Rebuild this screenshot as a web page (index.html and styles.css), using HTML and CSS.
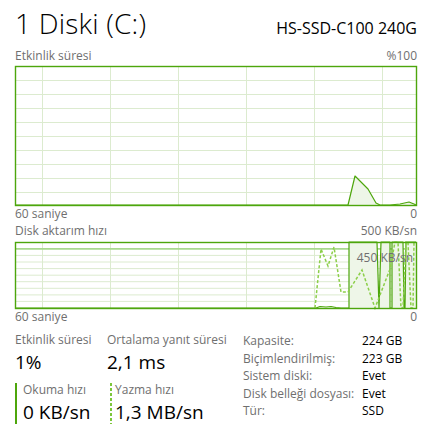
FILE: index.html
```html
<!DOCTYPE html>
<html lang="tr">
<head>
<meta charset="utf-8">
<title>1 Diski (C:)</title>
<link rel="stylesheet" href="styles.css">
</head>
<body>
<div class="tm">
  <div class="title-row">
    <div class="title">1 Diski (C:)</div>
    <div class="model">HS-SSD-C100 240G</div>
  </div>

  <div class="chart-head chart-head-1"><span>Etkinlik süresi</span><span>%100</span></div>
  <svg class="chart chart-1" width="402" height="140" viewBox="15 61 402 140">
    <g class="grid">
      <line x1="15" y1="75.5" x2="417" y2="75.5"/>
      <line x1="15" y1="89.5" x2="417" y2="89.5"/>
      <line x1="15" y1="103.5" x2="417" y2="103.5"/>
      <line x1="15" y1="117.5" x2="417" y2="117.5"/>
      <line x1="15" y1="131.5" x2="417" y2="131.5"/>
      <line x1="15" y1="145.5" x2="417" y2="145.5"/>
      <line x1="15" y1="159.5" x2="417" y2="159.5"/>
      <line x1="15" y1="173.5" x2="417" y2="173.5"/>
      <line x1="15" y1="187.5" x2="417" y2="187.5"/>
      <line x1="42.5" y1="61" x2="42.5" y2="201"/>
      <line x1="110.5" y1="61" x2="110.5" y2="201"/>
      <line x1="178.5" y1="61" x2="178.5" y2="201"/>
      <line x1="246.5" y1="61" x2="246.5" y2="201"/>
      <line x1="314.5" y1="61" x2="314.5" y2="201"/>
      <line x1="382.5" y1="61" x2="382.5" y2="201"/>
    </g>
    <polygon class="fill" points="348,200 355,171 368,184 376,198 380,200 390,200 400,199 409,197 414,199 416,200"/>
    <polyline class="line" points="16,200 348,200 355,171 368,184 376,198 380,200 390,200 400,199 409,197 414,199 416,200"/>
    <rect class="frame" x="15.5" y="61.5" width="401" height="139"/>
  </svg>
  <div class="chart-foot chart-foot-1"><span>60 saniye</span><span>0</span></div>

  <div class="chart-head chart-head-2"><span>Disk aktarım hızı</span><span>500 KB/sn</span></div>
  <svg class="chart chart-2" width="402" height="67" viewBox="15 238 402 67">
    <g class="grid">
      <line x1="15" y1="251.4" x2="417" y2="251.4"/>
      <line x1="15" y1="258" x2="417" y2="258"/>
      <line x1="15" y1="264.6" x2="417" y2="264.6"/>
      <line x1="15" y1="271.2" x2="417" y2="271.2"/>
      <line x1="15" y1="277.7" x2="417" y2="277.7"/>
      <line x1="15" y1="284.3" x2="417" y2="284.3"/>
      <line x1="15" y1="290.9" x2="417" y2="290.9"/>
      <line x1="15" y1="297.4" x2="417" y2="297.4"/>
      <line x1="42.5" y1="238" x2="42.5" y2="305"/>
      <line x1="110.5" y1="238" x2="110.5" y2="305"/>
      <line x1="178.5" y1="238" x2="178.5" y2="305"/>
      <line x1="246.5" y1="238" x2="246.5" y2="305"/>
      <line x1="314.5" y1="238" x2="314.5" y2="305"/>
      <line x1="382.5" y1="238" x2="382.5" y2="305"/>
    </g>
    <line class="limit" x1="15" y1="244.9" x2="417" y2="244.9"/>
    <polygon class="fill" points="349,304 349,238 377,238 379,304 381,238 390,238 390,304 392,304 392,238 403,238 404,304 405,304 406,238 416,238 416,304"/>
    <polyline class="line" points="16,304 316,304 320,302.5 326,303 331,302.5 336,303.5 341,304 349,304 349,238 377,238 379,304 381,238 390,238 390,304 392,304 392,238 403,238 404,304 405,304 406,238 416,238"/>
    <polyline class="dash" points="315,304 321,245 328,262 334,243 341,288 348,288 362,266 375,304 390,265 395,238 398,238 401,304 403,304 406,238 408,238 411,304 413,304 414,238"/>
    <text class="limit-label" x="413" y="258" text-anchor="end">450 KB/sn</text>
    <rect class="frame" x="15.5" y="238.5" width="401" height="66"/>
  </svg>
  <div class="chart-foot chart-foot-2"><span>60 saniye</span><span>0</span></div>

  <div class="stats">
    <div class="stat-grid">
      <div class="stat">
        <div class="stat-label">Etkinlik süresi</div>
        <div class="stat-value">1%</div>
      </div>
      <div class="stat">
        <div class="stat-label">Ortalama yanıt süresi</div>
        <div class="stat-value">2,1 ms</div>
      </div>
      <div class="stat rate rate-read">
        <div class="stat-label">Okuma hızı</div>
        <div class="stat-value">0 KB/sn</div>
      </div>
      <div class="stat rate rate-write">
        <div class="stat-label">Yazma hızı</div>
        <div class="stat-value">1,3 MB/sn</div>
      </div>
    </div>
    <dl class="props">
      <dt>Kapasite:</dt><dd>224 GB</dd>
      <dt>Biçimlendirilmiş:</dt><dd>223 GB</dd>
      <dt>Sistem diski:</dt><dd>Evet</dd>
      <dt>Disk belleği dosyası:</dt><dd>Evet</dd>
      <dt>Tür:</dt><dd>SSD</dd>
    </dl>
  </div>
</div>
</body>
</html>
```

FILE: styles.css
```css
html, body {
  margin: 0;
  padding: 0;
  background: #ffffff;
}

.tm {
  width: 402px;
  padding: 8px 9px 0 15px;
  font-family: "Open Sans", "Noto Sans", "Liberation Sans", sans-serif;
  color: #000;
}

.title-row {
  display: flex;
  justify-content: space-between;
  align-items: baseline;
  line-height: 30px;
}

.title {
  font-size: 28px;
  font-weight: 300;
  letter-spacing: 0.2px;
}

.model {
  font-size: 16px;
  font-weight: 400;
}

.chart-head,
.chart-foot {
  display: flex;
  justify-content: space-between;
  font-size: 12px;
  line-height: 16px;
  color: #6f6f6f;
}

.chart-head-1 { margin-top: 5px; }
.chart-head-2 { margin-top: 1px; }

.chart {
  display: block;
  overflow: visible;
}

.chart-1 { margin-top: 2px; }
.chart-2 { margin-top: 3px; }
.chart-foot-1 { margin-top: 0; }

.grid line {
  stroke: #dcebcf;
  stroke-width: 1;
}

.frame {
  fill: none;
  stroke: #4da60c;
  stroke-width: 1.4;
}

.fill {
  fill: #eef6e8;
}

.line {
  fill: none;
  stroke: #4da60c;
  stroke-width: 1.2;
  stroke-linejoin: round;
}

.dash {
  fill: none;
  stroke: #8ccf49;
  stroke-width: 1.5;
  stroke-dasharray: 3 2;
}

.limit {
  stroke: #a9d98e;
  stroke-width: 1.6;
}

.limit-label {
  font-family: "Open Sans", "Noto Sans", sans-serif;
  font-size: 12px;
  fill: #6f6f6f;
}

.stats {
  display: flex;
  align-items: flex-start;
  margin-top: 7px;
}

.stat-grid {
  display: grid;
  grid-template-columns: 92px 136px;
  align-content: start;
  row-gap: 8px;
  flex: none;
}

.stat-label {
  font-size: 12px;
  line-height: 16px;
  color: #6f6f6f;
  white-space: nowrap;
}

.stat-value {
  font-size: 19px;
  line-height: 24px;
  margin-top: 2px;
  white-space: nowrap;
}

.rate {
  position: relative;
  padding-left: 8px;
}

.rate::before {
  content: "";
  position: absolute;
  left: 0;
  top: 1px;
  width: 2px;
  height: 41px;
}

.rate .stat-value { margin-top: 2px; }

.rate-read::before {
  background: #4da60c;
}

.rate-write {
  margin-left: 3px;
  padding-left: 5px;
}

.rate-write::before {
  background: repeating-linear-gradient(to bottom, #7cc63a 0 3px, transparent 3px 5px);
}

.props {
  flex: 1;
  display: grid;
  grid-template-columns: 119px auto;
  margin: 0;
  font-size: 12px;
  line-height: 17.5px;
}

.props dt {
  color: #6f6f6f;
  white-space: nowrap;
}

.props dd {
  margin: 0;
  color: #000;
  white-space: nowrap;
}
```
